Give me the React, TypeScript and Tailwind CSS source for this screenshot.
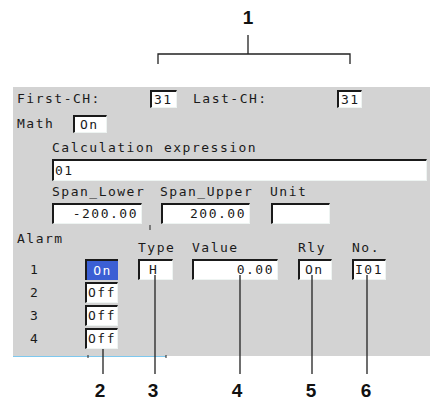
const box =
  "bg-white border-t-2 border-l-2 border-t-[#1a1a1a] border-l-[#1a1a1a] border-r border-b border-r-[#eef4f2] border-b-[#eef4f2] flex items-center";

function Field({ w, h, text, align = "left", pad = "pl-[2px]" }: { w: string; h: string; text?: string; align?: "left" | "right"; pad?: string }) {
  return (
    <div className={`${box} ${w} ${h} ${pad} ${align === "right" ? "justify-end pr-[3px]" : ""}`}>
      <span>{text}</span>
    </div>
  );
}

const alarms = [
  { n: "1", state: "On" },
  { n: "2", state: "Off" },
  { n: "3", state: "Off" },
  { n: "4", state: "Off" },
];

export default function App() {
  return (
    <div className="relative w-[430px] h-[401px] bg-white overflow-hidden">
      {/* callout "1" */}
      <div className="h-[87px] pt-[8px]">
        <div className="ml-[238px] w-[20px] text-center leading-[20px] text-[19px] font-bold text-[#111] font-['Liberation_Sans',Arial,sans-serif]">
          1
        </div>
      </div>

      {/* setting panel */}
      <div className="ml-[13px] w-[417px] h-[269px] bg-[#d3d3d3] pl-[4px] text-[13px] tracking-[1.5px] text-[#1a1a1a] font-['DejaVu_Sans_Mono',monospace] leading-[16px]">
        <div className="flex items-center h-[18px] pt-[3px] box-content">
          <span className="w-[133px]">First-CH:</span>
          <Field w="w-[27px]" h="h-[18px]" text="31" />
          <span className="ml-[16px] w-[144px]">Last-CH:</span>
          <Field w="w-[25px]" h="h-[18px]" text="31" />
        </div>

        <div className="flex items-center h-[18px] mt-[7px]">
          <span className="w-[56px]">Math</span>
          <Field w="w-[34px]" h="h-[18px]" text="On" pad="pl-[5px]" />
        </div>

        <div className="flex items-center h-[16px] mt-[7px] ml-[35px]">Calculation expression</div>

        <div className="mt-[3px] ml-[35px]">
          <Field w="w-[375px]" h="h-[22px]" text="01" pad="pl-[1px]" />
        </div>

        <div className="flex items-center h-[16px] mt-[3px] ml-[35px]">
          <span className="w-[108px]">Span_Lower</span>
          <span className="w-[110px]">Span_Upper</span>
          <span>Unit</span>
        </div>

        <div className="flex items-center h-[21px] mt-[3px] ml-[35px]">
          <Field w="w-[90px]" h="h-[21px]" text="-200.00" align="right" />
          <div className="ml-[19px]">
            <Field w="w-[89px]" h="h-[21px]" text="200.00" align="right" />
          </div>
          <div className="ml-[21px]">
            <Field w="w-[59px]" h="h-[21px]" />
          </div>
        </div>

        <div className="flex items-start h-[33px]">
          <span className="w-[121px] mt-[7px]">Alarm</span>
          <span className="w-[54px] mt-[16px]">Type</span>
          <span className="w-[106px] mt-[16px]">Value</span>
          <span className="w-[54px] mt-[16px]">Rly</span>
          <span className="mt-[16px]">No.</span>
        </div>

        <div className="mt-[2px] flex flex-col gap-[2px]">
          {alarms.map((a) => (
            <div key={a.n} className="flex items-center h-[21px]">
              <span className="ml-[13px] w-[55px]">{a.n}</span>
              {a.state === "On" ? (
                <div className="w-[33px] h-[21px] bg-[#3b5fd4] text-white border-t-2 border-l-2 border-[#1a1a1a] border-r-0 border-b-0 flex items-center justify-center">
                  On
                </div>
              ) : (
                <Field w="w-[33px]" h="h-[21px]" text="Off" pad="pl-[1px]" />
              )}
              {a.n === "1" && (
                <>
                  <div className="ml-[20px]">
                    <Field w="w-[35px]" h="h-[21px]" text="H" pad="pl-[9px]" />
                  </div>
                  <div className="ml-[19px]">
                    <Field w="w-[86px]" h="h-[21px]" text="0.00" align="right" />
                  </div>
                  <div className="ml-[20px]">
                    <Field w="w-[34px]" h="h-[21px]" text="On" pad="pl-[5px]" />
                  </div>
                  <div className="ml-[20px]">
                    <Field w="w-[34px]" h="h-[21px]" text="I01" pad="pl-[1px]" />
                  </div>
                </>
              )}
            </div>
          ))}
        </div>
      </div>
      <div className="ml-[13px] w-[153px] h-px bg-[#7ec8ee]" />

      {/* callout numbers */}
      <div className="flex mt-[24px] leading-[20px] text-[19px] font-bold text-[#111] font-['Liberation_Sans',Arial,sans-serif]">
        <span className="ml-[90px] w-[20px] text-center">2</span>
        <span className="ml-[33px] w-[20px] text-center">3</span>
        <span className="ml-[64px] w-[20px] text-center">4</span>
        <span className="ml-[54px] w-[20px] text-center">5</span>
        <span className="ml-[35px] w-[20px] text-center">6</span>
      </div>

      {/* leader lines */}
      <svg className="absolute inset-0 pointer-events-none" width="430" height="401" viewBox="0 0 430 401">
        <g stroke="#222" strokeWidth="1.3" fill="none">
          <path d="M248 35V54M158 64V54H350V64" />
          <path d="M103 349V374M155 275V374M240 275V374M312 275V374M367 275V374" />
          <path d="M150 225V230" strokeWidth="1" />
          <path d="M88 355V358M166 355V358" strokeWidth="1" />
        </g>
      </svg>
    </div>
  );
}
